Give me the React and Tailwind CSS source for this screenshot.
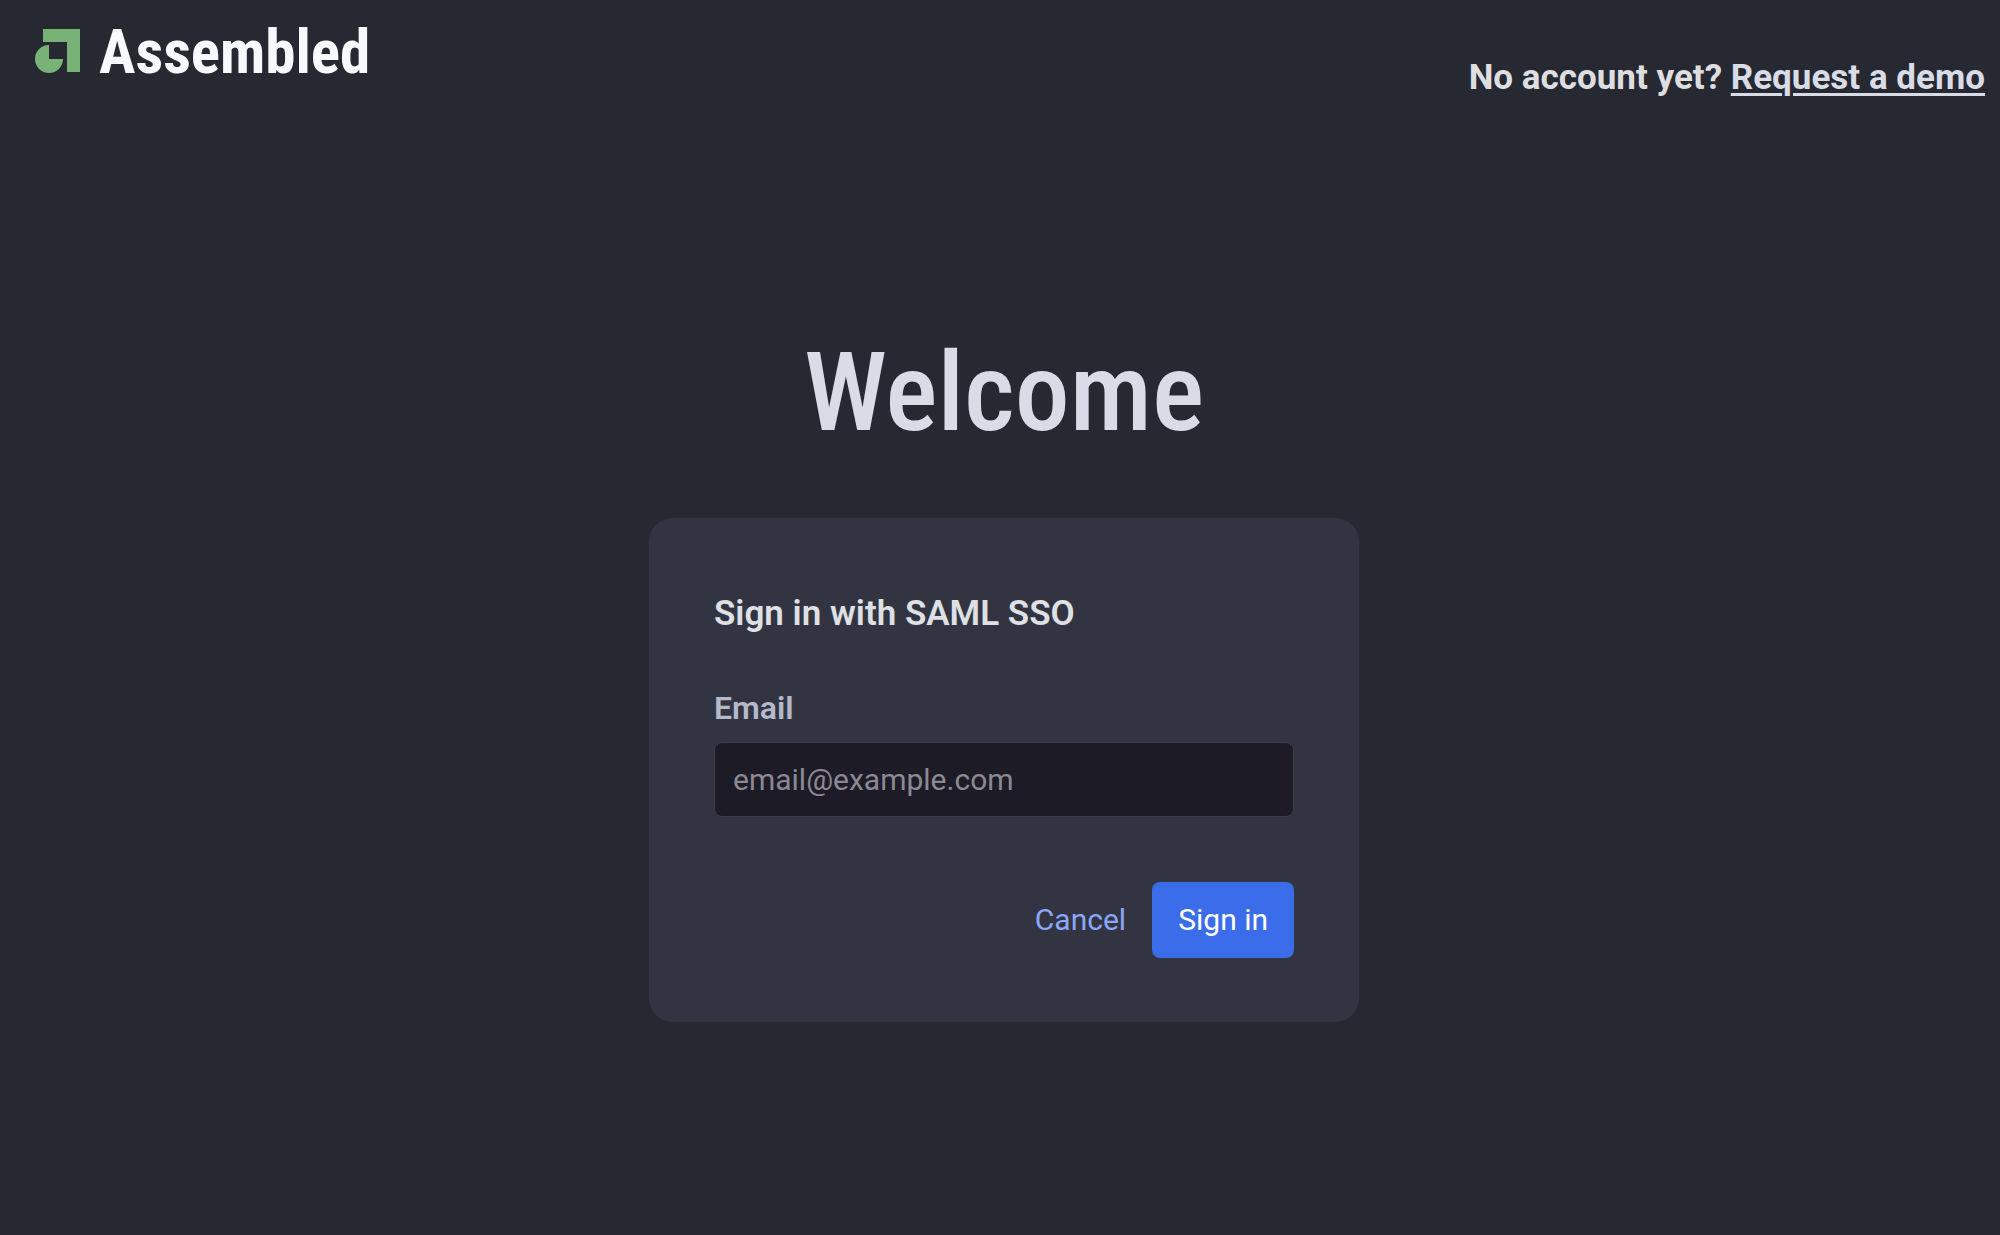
import { useState } from 'react';

function Logo() {
  return (
    <a href="#" aria-label="Assembled" className="flex items-center gap-[18px]">
      <svg viewBox="0 0 46 46" className="w-[46px] h-[46px] fill-[#78b277]" aria-hidden="true">
        <path d="M8 0H45V43H32V13H8Z" />
        <path d="M14 16V30H28A14 14 0 1 1 14 16Z" />
      </svg>
      <span className="font-['Roboto_Condensed',Roboto,sans-serif] text-[61px] leading-[64px] font-bold text-[#f8f9fd]">
        Assembled
      </span>
    </a>
  );
}

export default function App() {
  const [email, setEmail] = useState('');

  const handleSubmit = (e) => {
    e.preventDefault();
  };

  return (
    <div className="min-h-screen bg-[#262931] font-[Roboto,'Noto_Sans',sans-serif] text-[#d9dce6]">
      <header className="flex items-start justify-between pl-[35px] pr-[15px] pt-5">
        <Logo />
        <p className="pt-[33px] text-[35px] leading-[50px] font-bold text-[#dedee0]">
          No account yet?{' '}
          <a href="#" className="text-[#d9dce6] underline decoration-[3px] underline-offset-4">Request a demo</a>
        </p>
      </header>

      <main className="flex flex-col items-center pl-2 pt-[220px]">
        <h1 className="font-['Roboto_Condensed',Roboto,sans-serif] text-[110px] leading-[140px] font-medium">
          Welcome
        </h1>
        <form
          onSubmit={handleSubmit}
          className="mt-[55px] w-full max-w-[710px] rounded-3xl bg-[#323541] px-[65px] pt-[71px] pb-[64px]"
        >
          <h2 className="text-[35px] leading-[50px] font-semibold text-[#dfe0e4]">Sign in with SAML SSO</h2>
          <label htmlFor="email" className="mt-[49px] block text-[32px] leading-10 font-semibold text-[#b5b9c9]">
            Email
          </label>
          <input
            id="email"
            type="email"
            value={email}
            onChange={(e) => setEmail(e.target.value)}
            placeholder="email@example.com"
            className="mt-[14px] block h-[75px] w-full rounded-lg border border-[#3b3c48] bg-[#1d1b25] px-[18px] text-[30px] text-[#d9dce6] placeholder:text-[#8b8994]"
          />
          <div className="mt-[65px] flex items-center justify-end gap-[26px]">
            <button type="button" className="text-[30px] leading-10 text-[#8ba6fb]">Cancel</button>
            <button type="submit" className="h-[76px] rounded-lg bg-[#3b6dea] px-[26px] text-[30px] leading-10 text-white">
              Sign in
            </button>
          </div>
        </form>
      </main>
    </div>
  );
}
